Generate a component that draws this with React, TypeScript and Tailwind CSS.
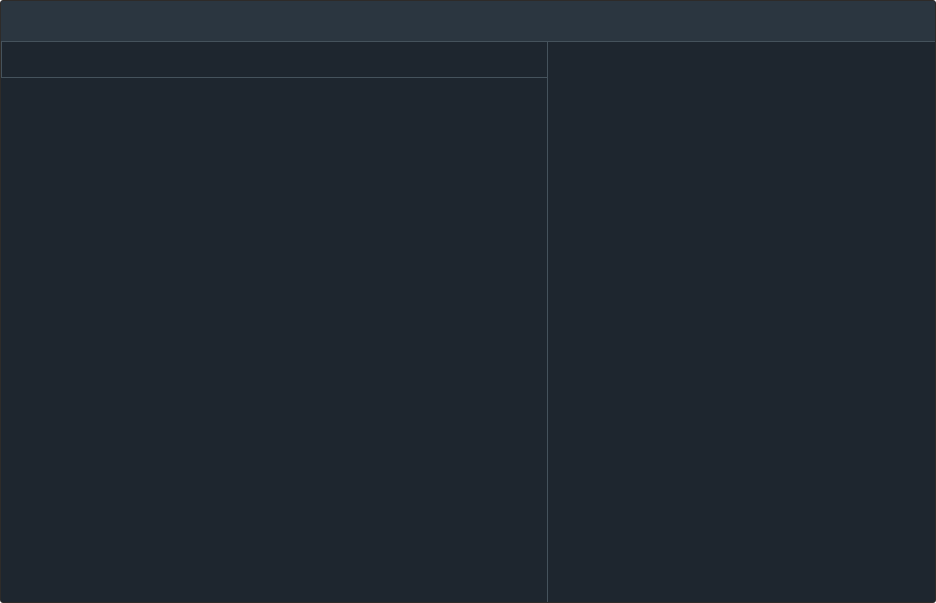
export default function App() {
  return (
    <div className="h-[603px] w-[936px] bg-white">
      <div className="flex h-full w-full flex-col overflow-hidden rounded-[3px] border border-[#2e2b29] bg-[#1e262f]">
        <header className="h-[41px] shrink-0 border-b border-[#45525c] bg-[#2b3640]" />
        <div className="flex min-h-0 flex-1">
          <section className="flex w-[547px] shrink-0 flex-col border-r border-[#45525c]">
            <div className="h-[36px] border-b border-l border-[#45525c]" />
            <div className="flex-1" />
          </section>
          <aside className="flex-1" />
        </div>
      </div>
    </div>
  );
}
